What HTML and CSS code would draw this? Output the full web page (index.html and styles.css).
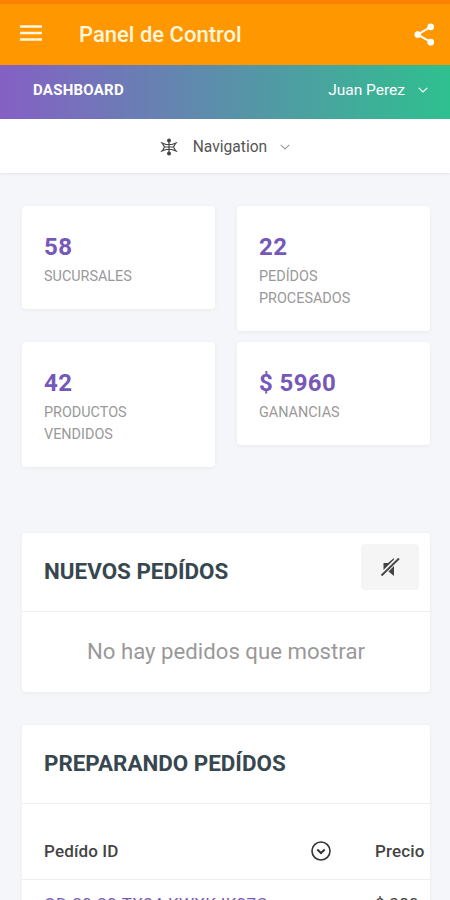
FILE: index.html
```
<!DOCTYPE html>
<html lang="es">
<head>
  <meta charset="UTF-8" />
  <title>Panel de Control</title>
  <meta name="viewport" content="width=device-width, initial-scale=1" />
  <link rel="stylesheet" href="styles.css">
</head>
<body>
  <header class="app-bar">
    <svg class="menu-icon" viewBox="0 0 22 16">
      <path d="M0 1.5h22M0 8h22M0 14.5h22" stroke="currentColor" stroke-width="2.3" />
    </svg>
    <h1>Panel de Control</h1>
    <svg class="share-icon" viewBox="0 0 22 24">
      <path d="M17.5 4L4 12l13.5 8" fill="none" stroke="currentColor" stroke-width="2" />
      <circle cx="17.5" cy="4" r="3.5" fill="currentColor" />
      <circle cx="4" cy="12" r="3.5" fill="currentColor" />
      <circle cx="17.5" cy="20" r="3.5" fill="currentColor" />
    </svg>
  </header>

  <div class="dash-bar">
    <span class="dash-title">DASHBOARD</span>
    <span class="user">Juan Perez</span>
    <svg class="chevron" viewBox="0 0 10 6"><path d="M.7.8L5 5 9.3.8" /></svg>
  </div>

  <nav class="nav-bar">
    <svg class="nav-icon" viewBox="0 0 18 18">
      <path d="M9 2v14M.8 4.5L6 6.5h6l5.2-2M.8 13.5L6 11.5h6l5.2 2M2.500 5.5L4.500 9l-2 3.5M15.500 5.5L13.500 9l2 3.5M4.500 9h9" fill="none" stroke="currentColor" stroke-width="1.2" />
      <circle cx="9" cy="2.5" r="2" fill="currentColor" />
      <circle cx="9" cy="15.5" r="2" fill="currentColor" />
    </svg>
    <span class="nav-label">Navigation</span>
    <svg class="chevron" viewBox="0 0 10 6"><path d="M.7.8L5 5 9.3.8" /></svg>
  </nav>

  <main>
    <div class="stats">
      <div class="card stat">
        <h2>58</h2>
        <p>SUCURSALES</p>
      </div>
      <div class="card stat">
        <h2>22</h2>
        <p>PEDÍDOS<br>PROCESADOS</p>
      </div>
      <div class="card stat">
        <h2>42</h2>
        <p>PRODUCTOS<br>VENDIDOS</p>
      </div>
      <div class="card stat">
        <h2>$ 5960</h2>
        <p>GANANCIAS</p>
      </div>
    </div>

    <section class="card orders">
      <div class="card-header">
        <h3>NUEVOS PEDÍDOS</h3>
        <button class="mute">
          <svg class="mute-icon" viewBox="0 0 20 20">
            <path d="M3.5 13V6H8l6-5v1.5z" fill="currentColor" />
            <path d="M8.500 14.5L14 9v10z" fill="currentColor" />
            <path d="M1.5 18.5L19 1.5" stroke="currentColor" stroke-width="1.8" />
          </svg>
        </button>
      </div>
      <p class="empty">No hay pedidos que mostrar</p>
    </section>

    <section class="card">
      <div class="card-header">
        <h3>PREPARANDO PEDÍDOS</h3>
      </div>
      <div class="table-wrap">
        <table>
          <thead>
            <tr>
              <th class="col-id">Pedído ID</th>
              <th class="col-sort">
                <svg class="sort-icon" viewBox="0 0 20 20">
                  <circle cx="10" cy="10" r="9" />
                  <path d="M6.3 8.5l3.7 3.5 3.7-3.5" stroke-width="2" />
                </svg>
              </th>
              <th>Precio</th>
            </tr>
          </thead>
          <tbody>
            <tr>
              <td colspan="2"><a href="#">OD-20-20-TX34-KWXK-IK07C</a></td>
              <td>$ 380</td>
            </tr>
          </tbody>
        </table>
      </div>
    </section>
  </main>
</body>
</html>
```
FILE: styles.css
```
* {
  box-sizing: border-box;
}
body {
  margin: 0;
  height: 900px;
  overflow: hidden;
  font-family: Roboto, sans-serif;
  color: #444;
  background-color: #f5f6fa;
}
h1, h2, h3, p {
  margin: 0;
}
svg {
  display: block;
  flex: none;
}
.app-bar {
  display: flex;
  align-items: center;
  height: 65px;
  padding: 0 15px 0 20px;
  border-top: 4px solid #fb8200;
  background-color: #ff9800;
  color: #fff6df;
}
.app-bar h1 {
  flex: 1;
  margin-left: 37px;
  font-size: 22px;
  font-weight: 500;
}
.menu-icon {
  width: 22px;
  height: 16px;
  margin-top: -3px;
}
.share-icon {
  width: 21px;
  height: 23px;
  color: #fff;
}
.dash-bar {
  display: flex;
  align-items: center;
  height: 54px;
  padding: 0 22px 4px 33px;
  background: linear-gradient(to right, #8560c5, #2fc08f);
  color: #fff;
}
.dash-title {
  flex: 1;
  font-size: 15px;
  font-weight: 700;
  letter-spacing: 0.25px;
}
.user {
  margin-right: 13px;
  font-size: 15.5px;
}
.chevron {
  width: 10px;
  height: 6px;
  fill: none;
  stroke: currentColor;
  stroke-width: 1.1;
}
.nav-bar {
  display: flex;
  align-items: center;
  justify-content: center;
  height: 54px;
  padding-top: 1px;
  background-color: #fff;
  box-shadow: 0 1px 2px rgba(0,0,0,0.08);
}
.nav-icon {
  width: 18px;
  height: 18px;
  margin-right: 15px;
}
.nav-label {
  margin-right: 13px;
  font-size: 15.6px;
  color: #555;
}
.nav-bar .chevron {
  color: #999;
}
main {
  padding: 33px 20px 0 22px;
}
.card {
  background-color: #fff;
  border-radius: 4px;
  box-shadow: 0 1px 4px rgba(0,0,0,0.05);
}
.stats {
  display: grid;
  grid-template-columns: 1fr 1fr;
  align-items: start;
  gap: 11px 22px;
}
.stat {
  padding: 25px 22px 21px;
}
.stat h2 {
  font-size: 24px;
  line-height: 32px;
  font-weight: 700;
  letter-spacing: 0.4px;
  color: #7558b8;
}
.stat p {
  margin-top: 3px;
  font-size: 14.4px;
  line-height: 22px;
  color: #999;
}
.orders {
  margin: 66px 0 33px;
}
.card-header {
  display: flex;
  align-items: center;
  justify-content: space-between;
  height: 79px;
  padding: 0 11px 2px 22px;
  border-bottom: 1px solid #eee;
}
.card-header h3 {
  font-size: 22.4px;
  font-weight: 700;
  color: #37474f;
}
.mute {
  display: flex;
  align-items: center;
  justify-content: center;
  width: 58px;
  height: 46px;
  margin-bottom: 8px;
  border: none;
  border-radius: 4px;
  background-color: #f5f5f5;
  color: #444;
}
.mute-icon {
  width: 20px;
  height: 20px;
}
.empty {
  padding-bottom: 2px;
  font-size: 22.2px;
  line-height: 78px;
  text-align: center;
  color: #999;
}
.table-wrap {
  padding-top: 20px;
  overflow: hidden;
}
table {
  width: 460px;
  table-layout: fixed;
  border-collapse: collapse;
}
th, td {
  height: 55px;
  padding: 0 0 0 22px;
  border-bottom: 1px solid #eee;
  font-size: 17px;
  text-align: left;
}
th {
  font-weight: 500;
  letter-spacing: 0.15px;
}
td {
  height: 50px;
  letter-spacing: 0.3px;
}
.col-id {
  width: 267px;
}
.col-sort {
  width: 64px;
}
.sort-icon {
  width: 20px;
  height: 20px;
  fill: none;
  stroke: #333;
  stroke-width: 1.6;
}
a {
  color: #7558b8;
  text-decoration: none;
}
```
